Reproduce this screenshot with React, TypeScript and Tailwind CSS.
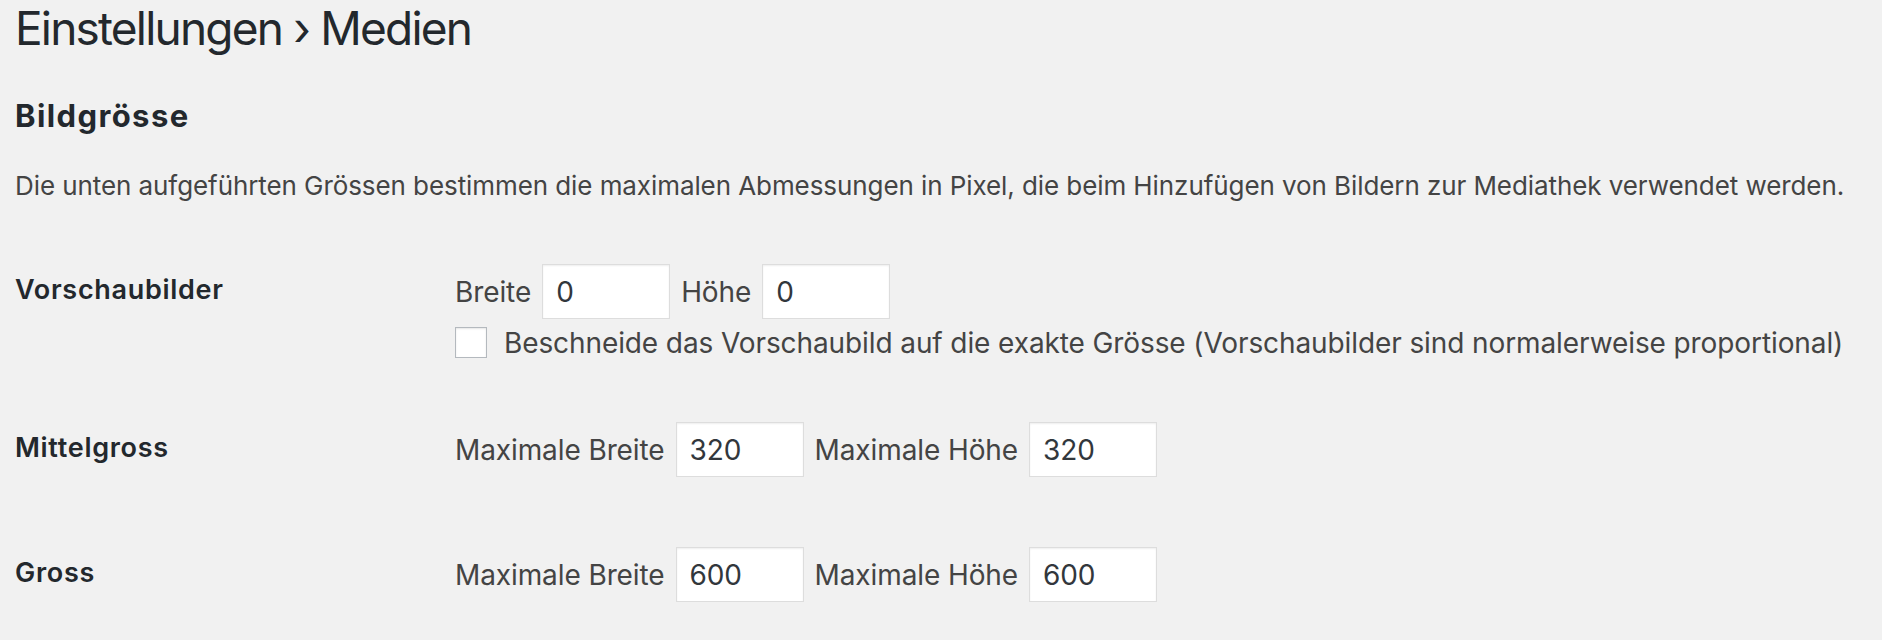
import React from "react";

type Field = { label: string; value: string };

type SizeRow = {
  title: string;
  fields: Field[];
  crop?: string;
};

const ROWS: SizeRow[] = [
  {
    title: "Vorschaubilder",
    fields: [
      { label: "Breite", value: "0" },
      { label: "Höhe", value: "0" },
    ],
    crop: "Beschneide das Vorschaubild auf die exakte Grösse (Vorschaubilder sind normalerweise proportional)",
  },
  {
    title: "Mittelgross",
    fields: [
      { label: "Maximale Breite", value: "320" },
      { label: "Maximale Höhe", value: "320" },
    ],
  },
  {
    title: "Gross",
    fields: [
      { label: "Maximale Breite", value: "600" },
      { label: "Maximale Höhe", value: "600" },
    ],
  },
];

function NumberField({ label, value }: Field) {
  return (
    <label className="flex items-center gap-[11px]">
      <span>{label}</span>
      <input
        type="text"
        defaultValue={value}
        className="h-[55px] w-[128px] border border-[#dddddd] bg-white px-[13px] text-[#32373c] shadow-[inset_0_1px_2px_rgba(0,0,0,0.07)] outline-none"
      />
    </label>
  );
}

function SettingsRow({ row, first }: { row: SizeRow; first: boolean }) {
  return (
    <div
      className={[
        "grid grid-cols-[440px_1fr]",
        first ? "mt-[65px]" : row.title === "Gross" ? "mt-[70px]" : "mt-[64px]",
      ].join(" ")}
    >
      <div className="pt-[12px] text-[27px] font-semibold leading-none tracking-[0.7px] text-[#23282d]">
        {row.title}
      </div>
      <div className="text-[28px] tracking-[-0.1px] text-[#444444]">
        <div className="flex items-center gap-[11px]">
          {row.fields.map((f) => (
            <NumberField key={f.label} label={f.label} value={f.value} />
          ))}
        </div>
        {row.crop ? (
          <label className="mt-[8px] flex h-[31px] items-center gap-[17px]">
            <input
              type="checkbox"
              className="h-[31px] w-[32px] shrink-0 appearance-none border border-[#b4b9be] bg-white shadow-[inset_0_1px_2px_rgba(0,0,0,0.1)]"
            />
            <span className="leading-none">{row.crop}</span>
          </label>
        ) : null}
      </div>
    </div>
  );
}

export default function App() {
  return (
    <div className="min-h-screen bg-[#f1f1f1] pl-[15px] pt-[5px] font-['Inter',sans-serif]">
      <h1 className="text-[46px] font-normal leading-none tracking-[-1.8px] text-[#23282d]">
        Einstellungen › Medien
      </h1>
      <h2 className="mt-[49px] text-[31px] font-bold leading-none tracking-[1.4px] text-[#23282d]">
        Bildgrösse
      </h2>
      <p className="mt-[42px] text-[26px] leading-none tracking-[-0.08px] text-[#444444]">
        Die unten aufgeführten Grössen bestimmen die maximalen Abmessungen in Pixel, die beim Hinzufügen von Bildern zur Mediathek verwendet werden.
      </p>
      {ROWS.map((row, i) => (
        <SettingsRow key={row.title} row={row} first={i === 0} />
      ))}
    </div>
  );
}
